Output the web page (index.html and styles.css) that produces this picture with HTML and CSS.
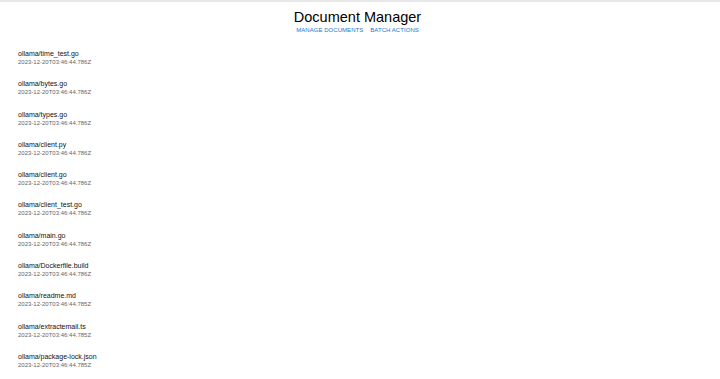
FILE: index.html
```html
<!DOCTYPE html>
<html>
<head>
  <meta charset="utf-8">
  <link rel="stylesheet" href="styles.css">
</head>
<body>
  <div class="topbar"></div>

  <div class="header">
    <h1 class="title">Document Manager</h1>
    <div class="nav">
      <a class="nav-link" href="#">Manage Documents</a>
      <a class="nav-link" href="#">Batch Actions</a>
    </div>
  </div>

  <!-- Document list -->
  <ul class="doc-list">
    <li class="doc-item">
      <div class="doc-name">ollama/time_test.go</div>
      <div class="doc-date">2023-12-20T03:46:44.786Z</div>
    </li>
    <li class="doc-item">
      <div class="doc-name">ollama/bytes.go</div>
      <div class="doc-date">2023-12-20T03:46:44.786Z</div>
    </li>
    <li class="doc-item">
      <div class="doc-name">ollama/types.go</div>
      <div class="doc-date">2023-12-20T03:46:44.786Z</div>
    </li>
    <li class="doc-item">
      <div class="doc-name">ollama/client.py</div>
      <div class="doc-date">2023-12-20T03:46:44.786Z</div>
    </li>
    <li class="doc-item">
      <div class="doc-name">ollama/client.go</div>
      <div class="doc-date">2023-12-20T03:46:44.786Z</div>
    </li>
    <li class="doc-item">
      <div class="doc-name">ollama/client_test.go</div>
      <div class="doc-date">2023-12-20T03:46:44.786Z</div>
    </li>
    <li class="doc-item">
      <div class="doc-name">ollama/main.go</div>
      <div class="doc-date">2023-12-20T03:46:44.786Z</div>
    </li>
    <li class="doc-item">
      <div class="doc-name">ollama/Dockerfile.build</div>
      <div class="doc-date">2023-12-20T03:46:44.786Z</div>
    </li>
    <li class="doc-item">
      <div class="doc-name">ollama/readme.md</div>
      <div class="doc-date">2023-12-20T03:46:44.785Z</div>
    </li>
    <li class="doc-item">
      <div class="doc-name">ollama/extractemail.ts</div>
      <div class="doc-date">2023-12-20T03:46:44.785Z</div>
    </li>
    <li class="doc-item">
      <div class="doc-name">ollama/package-lock.json</div>
      <div class="doc-date">2023-12-20T03:46:44.785Z</div>
    </li>
  </ul>
</body>
</html>
```

FILE: styles.css
```css
body {
  margin: 0;
  font-family: "Liberation Sans", Arial, sans-serif;
  background: #fff;
  color: #000;
}

.topbar {
  height: 2px;
  background: #e8e8e8;
}

.header {
  text-align: center;
  padding-right: 5px;
}

.title {
  font-size: 14.5px;
  font-weight: 400;
  line-height: 18px;
  margin: 6px 0 0 0;
}

.nav {
  display: flex;
  justify-content: center;
  gap: 7px;
  line-height: 8px;
}

.nav-link {
  font-size: 6px;
  font-weight: 500;
  letter-spacing: 0.05px;
  text-transform: uppercase;
  text-decoration: none;
  color: #1976d2;
}

/* Document list */
.doc-list {
  list-style: none;
  margin: 16px 0 0 0;
  padding: 0 0 0 18px;
}

.doc-item {
  margin-bottom: 14.3px;
}

.doc-name {
  font-size: 7px;
  line-height: 8px;
  color: #111;
}

.doc-date {
  font-size: 6px;
  line-height: 8px;
  color: #666;
}
```
